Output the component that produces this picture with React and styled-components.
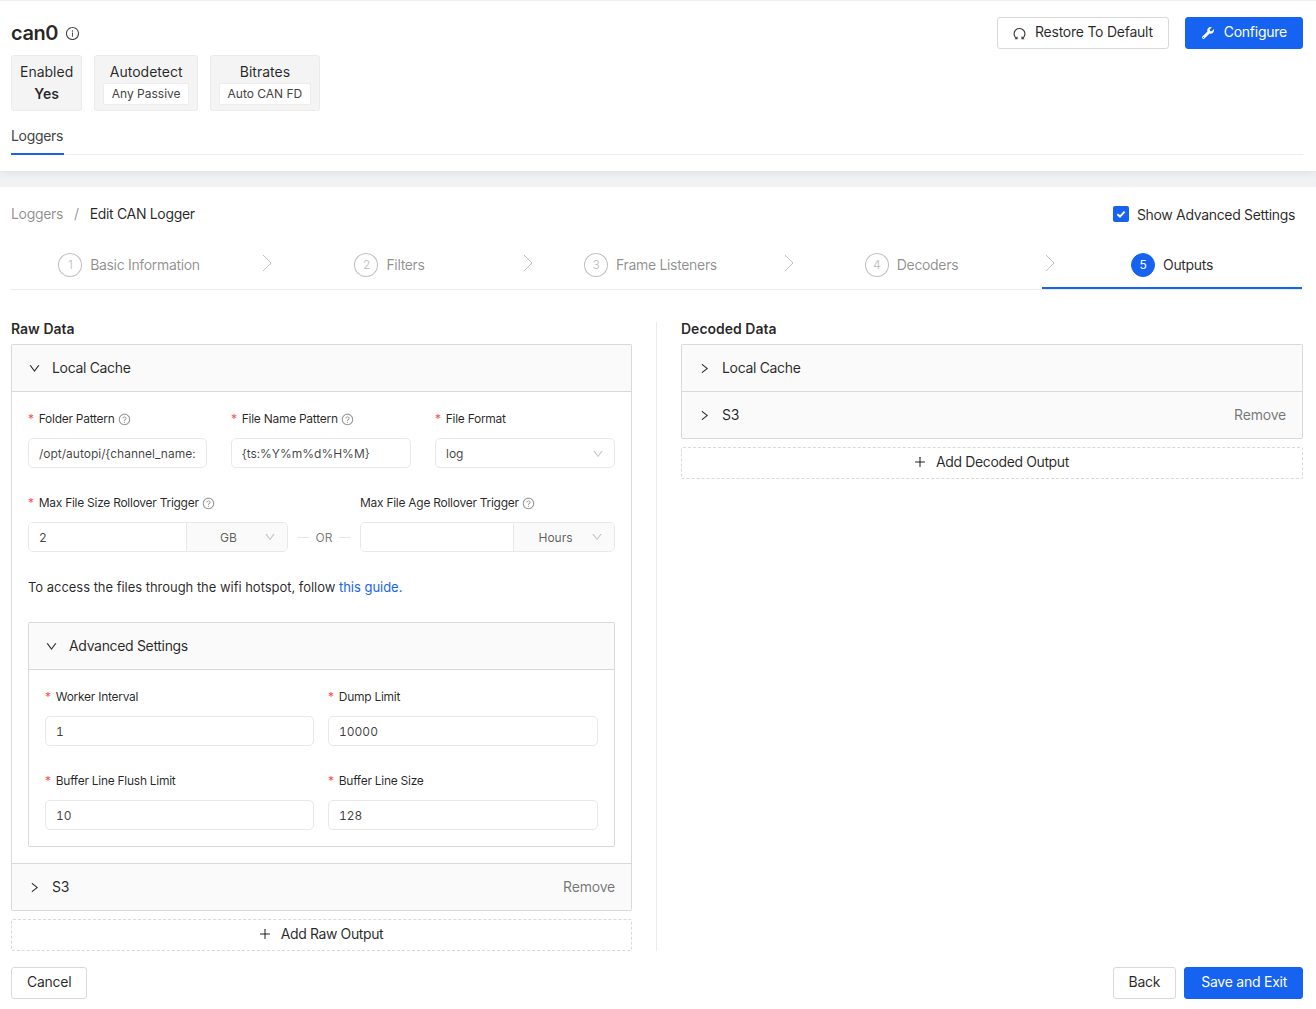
import React from "react";
import styled, { createGlobalStyle } from "styled-components";

// import icons
import {
  AiOutlineInfoCircle,
  AiOutlineQuestionCircle,
  AiOutlineDown,
  AiOutlineRight,
  AiOutlinePlus,
} from "react-icons/ai";
import { FaWrench } from "react-icons/fa";

const STEPS = ["Basic Information", "Filters", "Frame Listeners", "Decoders", "Outputs"];

const Help = () => (
  <HelpIcon>
    <AiOutlineQuestionCircle />
  </HelpIcon>
);

const RestoreGlyph = () => (
  <RestoreSvg width="13" height="13" viewBox="0 0 13 13">
    <path d="M3.9 11.6 A5.4 5.4 0 1 1 9.1 11.6" />
    <path d="M1.9 11.7 H4 V9.8" />
    <path d="M9 9.6 V11.7 H11.1" />
  </RestoreSvg>
);

const Field = ({ label, required, help, children }) => (
  <FieldBox>
    <FieldLabel>
      {required && <Star>*</Star>}
      {label}
      {help && <Help />}
    </FieldLabel>
    {children}
  </FieldBox>
);

const Panel = ({ title, open, remove, children }) => (
  <>
    <PanelHeader>
      <Arrow>{open ? <AiOutlineDown /> : <AiOutlineRight />}</Arrow>
      <PanelTitle>{title}</PanelTitle>
      {remove && <RemoveLink>Remove</RemoveLink>}
    </PanelHeader>
    {children}
  </>
);

const App = () => {
  return (
    <>
      <GlobalStyle />
      <Header>
        <TitleRow>
          <Title>
            can0
            <InfoIcon>
              <AiOutlineInfoCircle />
            </InfoIcon>
          </Title>
          <HeaderActions>
            <Button>
              <RestoreGlyph />
              Restore To Default
            </Button>
            <PrimaryButton>
              <WrenchIcon size={12} />
              Configure
            </PrimaryButton>
          </HeaderActions>
        </TitleRow>
        <Tags>
          <Tag>
            Enabled
            <TagStrong>Yes</TagStrong>
          </Tag>
          <Tag>
            Autodetect
            <TagValue>Any Passive</TagValue>
          </Tag>
          <Tag>
            Bitrates
            <TagValue>Auto CAN FD</TagValue>
          </Tag>
        </Tags>
        <Tabs>
          <TabItem>Loggers</TabItem>
        </Tabs>
      </Header>
      <Band />
      <Main>
        <TopRow>
          <Breadcrumb>
            <Crumb>Loggers</Crumb>
            <CrumbSep>/</CrumbSep>
            <CrumbActive>Edit CAN Logger</CrumbActive>
          </Breadcrumb>
          <CheckRow>
            <CheckBox>
              <svg width="12" height="12" viewBox="0 0 12 12">
                <polyline points="2.4,6.2 5,8.6 9.6,3.6" fill="none" stroke="#fff" strokeWidth="2" />
              </svg>
            </CheckBox>
            <CheckText>Show Advanced Settings</CheckText>
          </CheckRow>
        </TopRow>
        <Steps>
          {STEPS.map((name, i) => (
            <Step key={name} $index={i}>
              {i > 0 && (
                <StepChevron width="10" height="18" viewBox="0 0 10 18">
                  <polyline points="1,1 9,9 1,17" />
                </StepChevron>
              )}
              <StepNumber $active={i === 4}>{i + 1}</StepNumber>
              <StepName $active={i === 4}>{name}</StepName>
            </Step>
          ))}
        </Steps>
        <Columns>
          <RawColumn>
            <ColumnTitle>Raw Data</ColumnTitle>
            <Collapse>
              <Panel title="Local Cache" open>
                <PanelBody>
                  <ThreeCols>
                    <Field label="Folder Pattern" required help>
                      <Input readOnly defaultValue="/opt/autopi/{channel_name:" />
                    </Field>
                    <Field label="File Name Pattern" required help>
                      <Input readOnly defaultValue="{ts:%Y%m%d%H%M}" />
                    </Field>
                    <Field label="File Format" required>
                      <SelectBox>
                        log
                        <SelectArrow>
                          <AiOutlineDown />
                        </SelectArrow>
                      </SelectBox>
                    </Field>
                  </ThreeCols>
                  <RolloverRow>
                    <Field label="Max File Size Rollover Trigger" required help>
                      <InputGroup>
                        <GroupInput readOnly defaultValue="2" />
                        <Addon>
                          GB
                          <AddonArrow>
                            <AiOutlineDown />
                          </AddonArrow>
                        </Addon>
                      </InputGroup>
                    </Field>
                    <OrBox>
                      <OrLine />
                      OR
                      <OrLine />
                    </OrBox>
                    <Field label="Max File Age Rollover Trigger" help>
                      <InputGroup>
                        <GroupInput readOnly defaultValue="" />
                        <Addon>
                          Hours
                          <AddonArrow>
                            <AiOutlineDown />
                          </AddonArrow>
                        </Addon>
                      </InputGroup>
                    </Field>
                  </RolloverRow>
                  <GuideText>
                    To access the files through the wifi hotspot, follow <GuideLink href="#guide">this guide.</GuideLink>
                  </GuideText>
                  <Collapse>
                    <Panel title="Advanced Settings" open>
                      <PanelBody>
                        <TwoCols>
                          <Field label="Worker Interval" required>
                            <Input readOnly defaultValue="1" />
                          </Field>
                          <Field label="Dump Limit" required>
                            <Input readOnly defaultValue="10000" />
                          </Field>
                          <Field label="Buffer Line Flush Limit" required>
                            <Input readOnly defaultValue="10" />
                          </Field>
                          <Field label="Buffer Line Size" required>
                            <Input readOnly defaultValue="128" />
                          </Field>
                        </TwoCols>
                      </PanelBody>
                    </Panel>
                  </Collapse>
                </PanelBody>
              </Panel>
              <Panel title="S3" remove />
            </Collapse>
            <DashedButton>
              <AiOutlinePlus />
              Add Raw Output
            </DashedButton>
          </RawColumn>
          <ColumnDivider />
          <Column>
            <ColumnTitle>Decoded Data</ColumnTitle>
            <Collapse>
              <Panel title="Local Cache" />
              <Panel title="S3" remove />
            </Collapse>
            <DashedButton>
              <AiOutlinePlus />
              Add Decoded Output
            </DashedButton>
          </Column>
        </Columns>
        <Footer>
          <Button>Cancel</Button>
          <FooterRight>
            <Button>Back</Button>
            <PrimaryButton>Save and Exit</PrimaryButton>
          </FooterRight>
        </Footer>
      </Main>
    </>
  );
};

const GlobalStyle = createGlobalStyle`
  * {
    box-sizing: border-box;
  }

  body {
    margin: 0;
    background: #fff;
    color: rgba(0, 0, 0, 0.85);
    font-family: Inter, "Liberation Sans", sans-serif;
    font-size: 14px;
    line-height: 22px;
    letter-spacing: -0.33px;
  }
`;

const Header = styled.header`
  position: relative;
  padding: 16px 13px 16px 11px;
  border-top: 1px solid #f0f0f0;
  background: #fff;
  box-shadow: 0 2px 8px rgba(0, 0, 0, 0.08);
`;

const TitleRow = styled.div`
  display: flex;
  align-items: center;
  justify-content: space-between;
  height: 32px;
`;

const Title = styled.h1`
  display: flex;
  align-items: center;
  margin: 0;
  font-size: 20px;
  font-weight: 600;
  line-height: 32px;
  letter-spacing: -0.4px;
`;

const InfoIcon = styled.span`
  display: inline-flex;
  margin-left: 7px;
  font-size: 15px;
  color: #444;
`;

const HeaderActions = styled.div`
  display: flex;
  gap: 16px;
`;

const Button = styled.button`
  display: inline-flex;
  align-items: center;
  justify-content: center;
  gap: 9px;
  height: 32px;
  padding: 0 15px 4px;
  border: 1px solid #d9d9d9;
  border-radius: 3px;
  background: #fff;
  color: rgba(0, 0, 0, 0.85);
  font-family: inherit;
  font-size: 14px;
  letter-spacing: -0.25px;
`;

const PrimaryButton = styled(Button)`
  padding-left: 16px;
  border-color: #1563f0;
  background: #1563f0;
  color: #fff;
`;

const WrenchIcon = styled(FaWrench)`
  flex: none;
  margin: 4px 1px 0 0;
`;

const RestoreSvg = styled.svg`
  flex: none;
  margin-top: 4px;
  fill: none;
  stroke: #333;
  stroke-width: 1.1;
`;

const Tags = styled.div`
  display: flex;
  gap: 12px;
  margin-top: 6px;
`;

const Tag = styled.div`
  display: flex;
  flex-direction: column;
  align-items: center;
  height: 56px;
  padding: 5px 8px;
  border: 1px solid #ebebeb;
  border-radius: 3px;
  background: #f4f4f4;
  letter-spacing: 0;
`;

const TagStrong = styled.strong`
  font-weight: 600;
`;

const TagValue = styled.span`
  padding: 0 7.5px;
  border: 1px solid #ececec;
  border-radius: 2px;
  background: #fff;
  color: #444;
  font-size: 12px;
  line-height: 20px;
`;

const Tabs = styled.div`
  display: flex;
  margin-top: 14px;
  border-bottom: 1px solid #ececec;
`;

const TabItem = styled.div`
  margin-bottom: -1px;
  padding: 0 1px 6px 0;
  border-bottom: 2px solid #1563f0;
  color: #444;
`;

const Band = styled.div`
  height: 16px;
  background: #f0f2f3;
`;

const Main = styled.main`
  padding: 16px 13px 0 11px;
`;

const TopRow = styled.div`
  display: flex;
  align-items: center;
  justify-content: space-between;
  height: 22px;
`;

const Breadcrumb = styled.div`
  display: flex;
  align-items: center;
`;

const Crumb = styled.span`
  color: rgba(0, 0, 0, 0.45);
`;

const CrumbSep = styled.span`
  margin: 0 11px;
  color: rgba(0, 0, 0, 0.45);
`;

const CrumbActive = styled.span`
  color: rgba(0, 0, 0, 0.85);
`;

const CheckRow = styled.label`
  display: flex;
  align-items: center;
  gap: 8px;
  padding-right: 8px;
`;

const CheckBox = styled.span`
  display: inline-flex;
  align-items: center;
  justify-content: center;
  width: 16px;
  height: 16px;
  border-radius: 2px;
  background: #1563f0;
`;

const CheckText = styled.span`
  padding-top: 2px;
`;

const Steps = styled.div`
  display: flex;
  margin-top: 16px;
  border-bottom: 1px solid #ececec;
`;

const Step = styled.div`
  position: relative;
  display: flex;
  flex: 0 0 ${(p) => (p.$index === 0 ? "248px" : p.$index === 4 ? "260px" : "261px")};
  align-items: center;
  justify-content: center;
  gap: 8px;
  height: 48px;
  padding: 2px ${(p) => (p.$index === 0 ? "12px" : "0")} 0 0;
  border-bottom: 2px solid ${(p) => (p.$index === 4 ? "#1563f0" : "transparent")};
`;

const StepChevron = styled.svg`
  position: absolute;
  top: 13px;
  left: 3px;
  fill: none;
  stroke: #bfbfbf;
  stroke-width: 1;
`;

const StepNumber = styled.span`
  display: inline-flex;
  align-items: center;
  justify-content: center;
  width: 24px;
  height: 24px;
  border: 1px solid ${(p) => (p.$active ? "#1563f0" : "rgba(0, 0, 0, 0.25)")};
  border-radius: 50%;
  background: ${(p) => (p.$active ? "#1563f0" : "#fff")};
  color: ${(p) => (p.$active ? "#fff" : "rgba(0, 0, 0, 0.25)")};
  font-size: 12px;
`;

const StepName = styled.span`
  color: ${(p) => (p.$active ? "rgba(0, 0, 0, 0.85)" : "rgba(0, 0, 0, 0.45)")};
`;

const Columns = styled.div`
  display: flex;
  margin-top: 32px;
`;

const Column = styled.section`
  flex: 1 1 0;
  min-width: 0;
`;

const RawColumn = styled(Column)`
  flex: 0 0 621px;
`;

const ColumnDivider = styled.div`
  flex: 0 0 1px;
  margin: 0 24px;
  background: #ececec;
`;

const ColumnTitle = styled.h2`
  margin: 0 0 9px;
  font-size: 14px;
  font-weight: 600;
  line-height: 13px;
  letter-spacing: 0;
`;

const Collapse = styled.div`
  border: 1px solid #d9d9d9;
  border-bottom: 0;
  border-radius: 2px;
`;

const PanelHeader = styled.div`
  display: flex;
  align-items: center;
  height: 47px;
  padding: 0 16px;
  border-bottom: 1px solid #d9d9d9;
  background: #fafafa;
`;

const Arrow = styled.span`
  display: inline-flex;
  margin-right: 11px;
  font-size: 13px;
`;

const PanelTitle = styled.span`
  flex: 1;
`;

const RemoveLink = styled.span`
  color: rgba(0, 0, 0, 0.55);
  letter-spacing: -0.2px;
`;

const PanelBody = styled.div`
  padding: 17px 16px 16px;
  border-bottom: 1px solid #d9d9d9;
`;

const ThreeCols = styled.div`
  display: grid;
  grid-template-columns: 179px 180px 1fr;
  gap: 24px;
`;

const TwoCols = styled.div`
  display: grid;
  grid-template-columns: 269px 1fr;
  gap: 25px 14px;
`;

const RolloverRow = styled.div`
  display: grid;
  grid-template-columns: 260px 72px 1fr;
  margin-top: 25px;
`;

const FieldBox = styled.div`
  min-width: 0;
`;

const FieldLabel = styled.label`
  display: flex;
  align-items: center;
  height: 20px;
  margin-bottom: 9px;
  font-size: 12px;
  line-height: 20px;
  letter-spacing: -0.27px;
`;

const Star = styled.span`
  margin-right: 5px;
  color: #ff4d4f;
  font-size: 12px;
`;

const HelpIcon = styled.span`
  display: inline-flex;
  margin-left: 3px;
  color: rgba(0, 0, 0, 0.45);
  font-size: 13px;
`;

const Input = styled.input`
  display: block;
  width: 100%;
  height: 30px;
  padding: 1px 10px 0;
  border: 1px solid #e8e8e8;
  border-radius: 5px;
  outline: none;
  background: #fff;
  color: rgba(0, 0, 0, 0.75);
  font-family: inherit;
  font-size: 12px;
  font-feature-settings: "tnum";
  letter-spacing: 0;
`;

const SelectBox = styled.div`
  display: flex;
  align-items: center;
  height: 30px;
  padding: 2px 10px 0;
  border: 1px solid #e8e8e8;
  border-radius: 5px;
  color: rgba(0, 0, 0, 0.75);
  font-size: 12px;
  letter-spacing: 0;
`;

const SelectArrow = styled.span`
  display: inline-flex;
  margin-left: auto;
  color: rgba(0, 0, 0, 0.25);
  font-size: 12px;
`;

const InputGroup = styled.div`
  display: flex;
  height: 30px;
  border: 1px solid #e8e8e8;
  border-radius: 5px;
  overflow: hidden;
`;

const GroupInput = styled.input`
  flex: 1;
  min-width: 0;
  padding: 1px 10px 0;
  border: 0;
  outline: none;
  background: #fff;
  color: rgba(0, 0, 0, 0.75);
  font-family: inherit;
  font-size: 12px;
  font-feature-settings: "tnum";
  letter-spacing: 0;
`;

const Addon = styled.div`
  position: relative;
  display: flex;
  flex: 0 0 101px;
  align-items: center;
  justify-content: center;
  padding: 2px 17px 0 0;
  border-left: 1px solid #e8e8e8;
  background: #fafafa;
  color: rgba(0, 0, 0, 0.65);
  font-size: 12px;
  letter-spacing: 0;
`;

const AddonArrow = styled.span`
  position: absolute;
  top: 8px;
  right: 11px;
  display: inline-flex;
  color: rgba(0, 0, 0, 0.25);
  font-size: 12px;
`;

const OrBox = styled.div`
  display: flex;
  align-items: center;
  justify-content: center;
  gap: 7px;
  padding-top: 30px;
  color: rgba(0, 0, 0, 0.55);
  font-size: 12px;
  letter-spacing: 0;
`;

const OrLine = styled.span`
  width: 11px;
  height: 1px;
  background: #e4e4e4;
`;

const GuideText = styled.p`
  margin: 24px 0;
  font-size: 13px;
  letter-spacing: -0.03px;
`;

const GuideLink = styled.a`
  color: #1563f0;
  text-decoration: none;
`;

const DashedButton = styled.button`
  display: flex;
  align-items: center;
  justify-content: center;
  gap: 9px;
  width: 100%;
  height: 32px;
  margin-top: 8px;
  padding: 0 2px 3px 0;
  border: 1px dashed #d9d9d9;
  border-radius: 2px;
  background: #fff;
  color: rgba(0, 0, 0, 0.85);
  font-family: inherit;
  font-size: 14px;
  letter-spacing: -0.38px;
`;

const Footer = styled.footer`
  display: flex;
  justify-content: space-between;
  margin-top: 16px;
  padding-bottom: 10px;
`;

const FooterRight = styled.div`
  display: flex;
  gap: 8px;
`;

export default App;
